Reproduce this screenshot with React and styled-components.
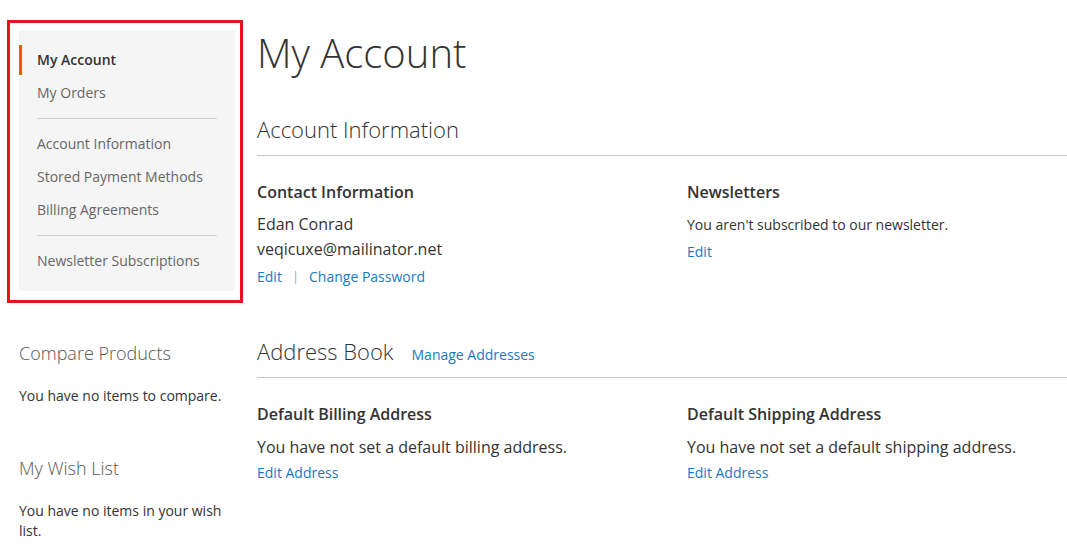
import React from "react";
import styled, { createGlobalStyle } from "styled-components";

const GlobalStyle = createGlobalStyle`
  html, body {
    margin: 0;
    padding: 0;
    background: #fff;
  }
  body {
    font-family: "Open Sans", "Liberation Sans", sans-serif;
    color: #333;
    font-size: 14px;
  }
`;

const navSections = [
  [
    { label: "My Account", active: true },
    { label: "My Orders" },
  ],
  [
    { label: "Account Information" },
    { label: "Stored Payment Methods" },
    { label: "Billing Agreements" },
  ],
  [{ label: "Newsletter Subscriptions" }],
];

const App = () => {
  return (
    <Page>
      <GlobalStyle />
      <Sidebar>
        <NavBox>
          <Highlight />
          {navSections.map((section, i) => (
            <React.Fragment key={i}>
              {i > 0 && <NavDivider />}
              <NavSection>
                {section.map((item) => (
                  <NavItem key={item.label} active={item.active}>
                    {item.label}
                  </NavItem>
                ))}
              </NavSection>
            </React.Fragment>
          ))}
        </NavBox>

        <SideBlock first>
          <SideTitle>Compare Products</SideTitle>
          <SideText>You have no items to compare.</SideText>
        </SideBlock>
        <SideBlock>
          <SideTitle>My Wish List</SideTitle>
          <SideText>You have no items in your wish list.</SideText>
        </SideBlock>
      </Sidebar>

      <Main>
        <PageTitle>My Account</PageTitle>

        <BlockTitle>
          <span>Account Information</span>
        </BlockTitle>
        <BoxGrid>
          <Box>
            <BoxTitle>Contact Information</BoxTitle>
            <ContactText>Edan Conrad</ContactText>
            <ContactText>veqicuxe@mailinator.net</ContactText>
            <Actions>
              <LinkText href="#">Edit</LinkText>
              <Sep>|</Sep>
              <LinkText href="#">Change Password</LinkText>
            </Actions>
          </Box>
          <Box>
            <BoxTitle>Newsletters</BoxTitle>
            <SmallText>You aren't subscribed to our newsletter.</SmallText>
            <Actions>
              <LinkText href="#">Edit</LinkText>
            </Actions>
          </Box>
        </BoxGrid>

        <BlockTitle spaced>
          <span>Address Book</span>
          <TitleLink href="#">Manage Addresses</TitleLink>
        </BlockTitle>
        <BoxGrid>
          <Box>
            <BoxTitle address>Default Billing Address</BoxTitle>
            <AddressText>You have not set a default billing address.</AddressText>
            <Actions tight>
              <LinkText href="#">Edit Address</LinkText>
            </Actions>
          </Box>
          <Box>
            <BoxTitle address>Default Shipping Address</BoxTitle>
            <AddressText>You have not set a default shipping address.</AddressText>
            <Actions tight>
              <LinkText href="#">Edit Address</LinkText>
            </Actions>
          </Box>
        </BoxGrid>
      </Main>
    </Page>
  );
};

export default App;

const Page = styled.div`
  display: flex;
  align-items: flex-start;
  padding-left: 19px;
  min-height: 555px;
  box-sizing: border-box;
`;

const Sidebar = styled.aside`
  width: 216px;
  flex-shrink: 0;
  padding-top: 30px;
`;

const NavBox = styled.nav`
  position: relative;
  background: #f5f5f5;
  padding: 15px 0;
  display: flex;
  flex-direction: column;
`;

// red annotation frame drawn over the nav
const Highlight = styled.div`
  position: absolute;
  top: -10px;
  left: -12px;
  right: -8px;
  bottom: -12px;
  border: 3px solid #e8131a;
  pointer-events: none;
`;

const NavSection = styled.div`
  display: flex;
  flex-direction: column;
  gap: 3px;
`;

const NavItem = styled.div`
  height: 30px;
  line-height: 30px;
  padding-left: 15px;
  border-left: 3px solid ${(p) => (p.active ? "#ff5501" : "transparent")};
  font-size: 14px;
  font-weight: ${(p) => (p.active ? 600 : 400)};
  color: ${(p) => (p.active ? "#333" : "#666")};
  white-space: nowrap;
`;

const NavDivider = styled.div`
  height: 1px;
  background: #d1d1d1;
  margin: 10px 18px;
`;

const SideBlock = styled.div`
  margin-top: ${(p) => (p.first ? "50px" : "50px")};
`;

const SideTitle = styled.div`
  font-size: 18px;
  line-height: 24px;
  font-weight: 300;
  color: #575757;
`;

const SideText = styled.p`
  margin: 21px 0 0;
  font-size: 14px;
  line-height: 20px;
  color: #333;
`;

const Main = styled.main`
  flex: 1;
  margin-left: 22px;
  padding-top: 31px;
`;

const PageTitle = styled.h1`
  margin: 0;
  font-size: 40px;
  line-height: 44px;
  font-weight: 300;
  color: #333;
`;

const BlockTitle = styled.div`
  margin-top: ${(p) => (p.spaced ? "48px" : "40px")};
  padding-bottom: 12px;
  border-bottom: 1px solid #c6c6c6;
  display: flex;
  align-items: baseline;
  gap: 18px;

  span {
    font-size: 22px;
    line-height: 28px;
    font-weight: 300;
    color: #333;
  }
`;

const TitleLink = styled.a`
  font-size: 14px;
  color: #1979c3;
  text-decoration: none;
`;

const BoxGrid = styled.div`
  display: grid;
  grid-template-columns: 430px 1fr;
  padding-top: 25px;
`;

const Box = styled.div`
  display: flex;
  flex-direction: column;
`;

const BoxTitle = styled.div`
  font-size: 16px;
  line-height: 22px;
  font-weight: 600;
  color: #333;
  margin-bottom: ${(p) => (p.address ? "10px" : "9px")};
`;

const ContactText = styled.div`
  font-size: 16px;
  line-height: 25px;
  color: #333;
`;

const SmallText = styled.div`
  font-size: 14px;
  line-height: 25px;
  color: #333;
`;

const AddressText = styled.div`
  font-size: 16px;
  line-height: 25px;
  color: #333;
`;

const Actions = styled.div`
  display: flex;
  align-items: center;
  margin-top: ${(p) => (p.tight ? "0px" : "2px")};
  font-size: 14px;
  line-height: 25px;
`;

const LinkText = styled.a`
  color: #1979c3;
  text-decoration: none;
`;

const Sep = styled.span`
  color: #a6a6a6;
  margin: 0 10px;
  font-size: 13px;
`;
